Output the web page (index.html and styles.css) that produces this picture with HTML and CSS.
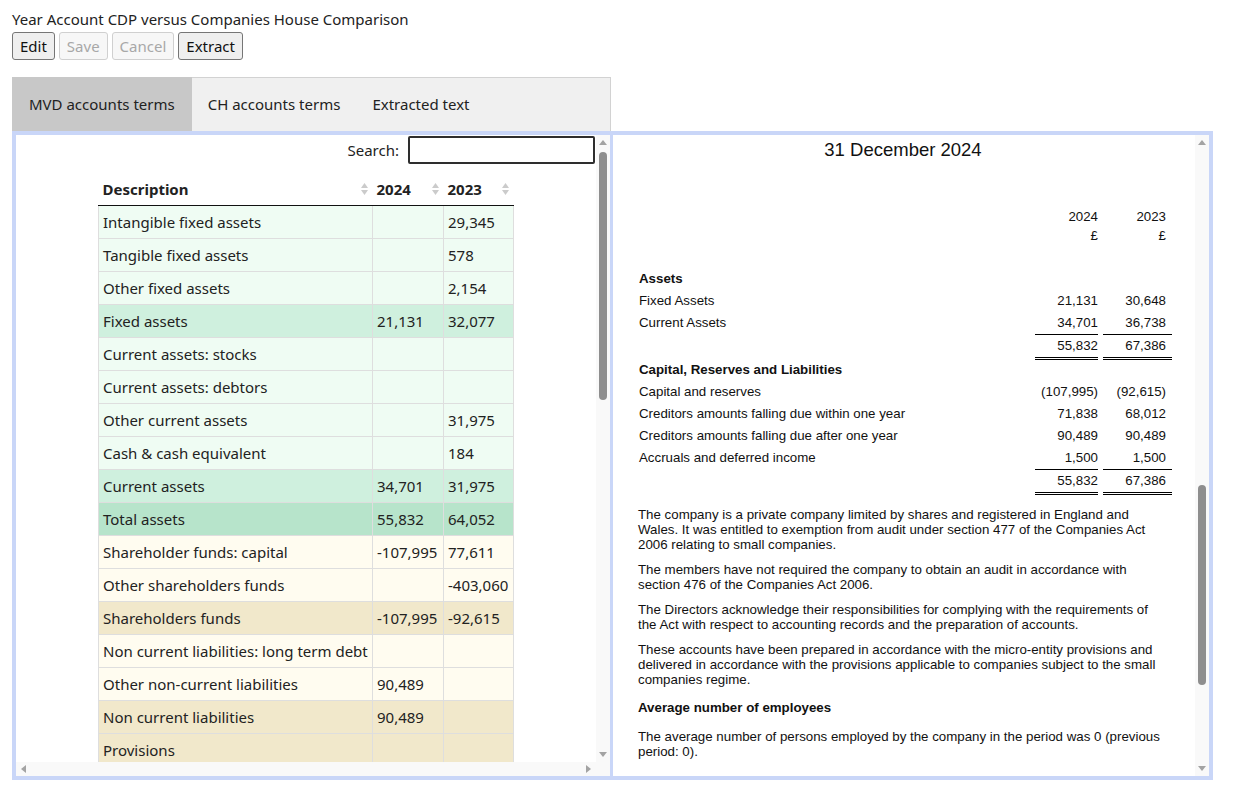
FILE: index.html
```html
<!DOCTYPE html>
<html lang="en">
<head>
  <meta charset="UTF-8" />
  <meta name="viewport" content="width=device-width, initial-scale=1.0"/>
  <title>Year Account Comparison</title>
  <link rel="stylesheet" href="styles.css">
</head>
<body>
  <div class="title">Year Account CDP versus Companies House Comparison</div>
  <div class="toolbar">
    <button>Edit</button>
    <button disabled>Save</button>
    <button disabled>Cancel</button>
    <button>Extract</button>
  </div>

  <!-- Tabs -->
  <div class="tabs">
    <div class="tab active">MVD accounts terms</div>
    <div class="tab">CH accounts terms</div>
    <div class="tab">Extracted text</div>
  </div>

  <div class="compare">
    <!-- Left: mapped terms -->
    <div class="pane pane-left">
      <div class="pane-body">
        <div class="search">
          <label>Search:</label>
          <input type="text">
        </div>
        <table class="terms">
          <colgroup>
            <col style="width:274px">
            <col style="width:71px">
            <col style="width:70px">
          </colgroup>
          <thead>
            <tr>
              <th><div class="th">Description <svg class="sort" width="7" height="12" viewBox="0 0 7 12"><polygon points="0,5 3.5,0 7,5"/><polygon points="0,7 3.5,12 7,7"/></svg></div></th>
              <th><div class="th">2024 <svg class="sort" width="7" height="12" viewBox="0 0 7 12"><polygon points="0,5 3.5,0 7,5"/><polygon points="0,7 3.5,12 7,7"/></svg></div></th>
              <th><div class="th">2023 <svg class="sort" width="7" height="12" viewBox="0 0 7 12"><polygon points="0,5 3.5,0 7,5"/><polygon points="0,7 3.5,12 7,7"/></svg></div></th>
            </tr>
          </thead>
          <tbody>
            <tr class="g1"><td>Intangible fixed assets</td><td></td><td>29,345</td></tr>
            <tr class="g1"><td>Tangible fixed assets</td><td></td><td>578</td></tr>
            <tr class="g1"><td>Other fixed assets</td><td></td><td>2,154</td></tr>
            <tr class="g2"><td>Fixed assets</td><td>21,131</td><td>32,077</td></tr>
            <tr class="g1"><td>Current assets: stocks</td><td></td><td></td></tr>
            <tr class="g1"><td>Current assets: debtors</td><td></td><td></td></tr>
            <tr class="g1"><td>Other current assets</td><td></td><td>31,975</td></tr>
            <tr class="g1"><td>Cash &amp; cash equivalent</td><td></td><td>184</td></tr>
            <tr class="g2"><td>Current assets</td><td>34,701</td><td>31,975</td></tr>
            <tr class="g3"><td>Total assets</td><td>55,832</td><td>64,052</td></tr>
            <tr class="y1"><td>Shareholder funds: capital</td><td>-107,995</td><td>77,611</td></tr>
            <tr class="y1"><td>Other shareholders funds</td><td></td><td>-403,060</td></tr>
            <tr class="y2"><td>Shareholders funds</td><td>-107,995</td><td>-92,615</td></tr>
            <tr class="y1"><td>Non current liabilities: long term debt</td><td></td><td></td></tr>
            <tr class="y1"><td>Other non-current liabilities</td><td>90,489</td><td></td></tr>
            <tr class="y2"><td>Non current liabilities</td><td>90,489</td><td></td></tr>
            <tr class="y2"><td>Provisions</td><td></td><td></td></tr>
          </tbody>
        </table>
      </div>
      <div class="vbar">
        <span class="arr up"></span>
        <div class="track"><div class="thumb" style="margin-top:2px;height:248px"></div></div>
        <span class="arr down"></span>
      </div>
      <div class="hbar">
        <span class="arr left"></span>
        <span class="arr right"></span>
      </div>
      <div class="corner"></div>
    </div>

    <!-- Right: filed accounts -->
    <div class="pane pane-right">
      <div class="pane-body doc">
        <h2>31 December 2024</h2>
        <div class="years">
          <div class="row"><span></span><span class="num">2024</span><span class="num">2023</span></div>
          <div class="row"><span></span><span class="num">£</span><span class="num">£</span></div>
        </div>
        <div class="row first"><b>Assets</b></div>
        <div class="row"><span>Fixed Assets</span><span class="num">21,131</span><span class="num">30,648</span></div>
        <div class="row"><span>Current Assets</span><span class="num u">34,701</span><span class="num u">36,738</span></div>
        <div class="row sum"><span></span><span class="num uu">55,832</span><span class="num uu">67,386</span></div>
        <div class="row"><b>Capital, Reserves and Liabilities</b></div>
        <div class="row"><span>Capital and reserves</span><span class="num">(107,995)</span><span class="num">(92,615)</span></div>
        <div class="row"><span>Creditors amounts falling due within one year</span><span class="num">71,838</span><span class="num">68,012</span></div>
        <div class="row"><span>Creditors amounts falling due after one year</span><span class="num">90,489</span><span class="num">90,489</span></div>
        <div class="row"><span>Accruals and deferred income</span><span class="num u">1,500</span><span class="num u">1,500</span></div>
        <div class="row"><span></span><span class="num uu">55,832</span><span class="num uu">67,386</span></div>

        <p class="lead">The company is a private company limited by shares and registered in England and Wales. It was entitled to exemption from audit under section 477 of the Companies Act 2006 relating to small companies.</p>
        <p>The members have not required the company to obtain an audit in accordance with section 476 of the Companies Act 2006.</p>
        <p>The Directors acknowledge their responsibilities for complying with the requirements of the Act with respect to accounting records and the preparation of accounts.</p>
        <p>These accounts have been prepared in accordance with the micro-entity provisions and delivered in accordance with the provisions applicable to companies subject to the small companies regime.</p>
        <h3>Average number of employees</h3>
        <p>The average number of persons employed by the company in the period was 0 (previous period: 0).</p>
      </div>
      <div class="vbar">
        <span class="arr up"></span>
        <div class="track"><div class="thumb" style="margin-top:335px;height:200px"></div></div>
        <span class="arr down"></span>
      </div>
    </div>
  </div>
</body>
</html>
```

FILE: styles.css
```css
body {
  margin: 0;
  padding: 9px 12px;
  font-family: "Noto Sans", "Open Sans", sans-serif;
  font-size: 15px;
  color: #222;
  background: #fff;
}
.title {
  line-height: 20px;
}

/* Toolbar */
.toolbar {
  display: flex;
  gap: 4px;
  margin-top: 3px;
}
button {
  height: 28px;
  padding: 0 7px;
  font: inherit;
  color: #111;
  background: #efefef;
  border: 1px solid #767676;
  border-radius: 3px;
}
button:disabled {
  color: #a8a8a8;
  background: #f7f7f7;
  border-color: #d0d0d0;
}

/* Tabs */
.tabs {
  display: flex;
  width: 599px;
  height: 54px;
  margin-top: 17px;
  box-sizing: border-box;
  background: #f0f0f0;
  border: 1px solid #d2d2d2;
  border-bottom: none;
}
.tab {
  display: flex;
  align-items: center;
  padding: 0 16px 1px;
}
.tab.active {
  margin: -1px 0 0 -1px;
  padding-left: 17px;
  padding-right: 17px;
  background: #c8c8c8;
}

/* Compare frame */
.compare {
  display: flex;
  width: 1201px;
  height: 649px;
  box-sizing: border-box;
  border: 4px solid #c9d6f8;
}
.pane {
  display: grid;
  overflow: hidden;
}
.pane-left {
  width: 597px;
  box-sizing: border-box;
  border-right: 3px solid #c9d6f8;
  grid-template-columns: 1fr 14px;
  grid-template-rows: 1fr 14px;
}
.pane-right {
  flex: 1;
  grid-template-columns: 1fr 14px;
}
.pane-body {
  overflow: hidden;
  min-height: 0;
}

/* Scrollbars */
.vbar {
  display: flex;
  flex-direction: column;
  align-items: center;
  background: #f9f9f9;
}
.vbar .track {
  flex: 1;
  width: 100%;
  display: flex;
  flex-direction: column;
  align-items: center;
}
.thumb {
  width: 8px;
  border-radius: 4px;
  background: #8e8e8e;
}
.hbar {
  display: flex;
  justify-content: space-between;
  align-items: center;
  background: #f9f9f9;
}
.corner {
  background: #f9f9f9;
}
.arr {
  display: flex;
  align-items: center;
  justify-content: center;
  width: 15px;
  height: 15px;
  flex: none;
}
.arr::before {
  content: "";
  border: 4px solid transparent;
}
.arr.up::before { border-bottom: 5px solid #a3a3a3; border-top: none; }
.arr.down::before { border-top: 5px solid #a3a3a3; border-bottom: none; }
.arr.left::before { border-right: 5px solid #a3a3a3; border-left: none; }
.arr.right::before { border-left: 5px solid #a3a3a3; border-right: none; }

/* Terms table */
.search {
  display: flex;
  justify-content: flex-end;
  align-items: center;
  margin: 1px 1px 0 0;
}
.search label {
  margin-right: 9px;
}
.search input {
  width: 187px;
  height: 28px;
  box-sizing: border-box;
  border: 2px solid #2e2e2e;
  border-radius: 2px;
  font: inherit;
}
.terms {
  width: 415px;
  margin: 11px auto 0;
  table-layout: fixed;
  border-collapse: collapse;
}
.terms th {
  padding: 3px 5px 5px 4px;
  line-height: 22px;
  text-align: left;
  border-bottom: 1px solid #111;
}
.th {
  display: flex;
  justify-content: space-between;
  align-items: center;
}
.sort {
  fill: #cbcbcb;
}
.terms td {
  padding: 5px 4px;
  line-height: 22px;
  white-space: nowrap;
  border: 1px solid #dedede;
}
.g1 { background: #effcf3; }
.g2 { background: #cff0de; }
.g3 { background: #b7e4cb; }
.y1 { background: #fffcf0; }
.y2 { background: #f1e8cb; }

/* Filed accounts */
.doc {
  padding: 4px 22px 0 26px;
  font-family: "Liberation Sans", Arial, sans-serif;
  font-size: 13.3px;
  color: #111;
}
.doc h2 {
  margin: 0 0 0 -6px;
  font-size: 18.5px;
  font-weight: normal;
  line-height: 22px;
  text-align: center;
}
.years {
  margin-top: 46px;
}
.years .row {
  line-height: 19px;
}
.row {
  display: grid;
  grid-template-columns: 1fr 63px 69px;
  column-gap: 5px;
  width: 533px;
  line-height: 22px;
}
.row.first {
  margin-top: 23px;
}
.row.sum {
  margin-bottom: -1px;
}
.num {
  text-align: right;
}
.num + .num {
  padding-right: 6px;
}
.u { border-bottom: 1px solid #000; }
.uu { border-bottom: 3px double #000; }
.doc p {
  width: 530px;
  margin: 10px 0 10px -1px;
  line-height: 15px;
}
.doc p.lead {
  margin-top: 12px;
}
.doc h3 {
  margin: 13px 0 13px -1px;
  font-size: 13.3px;
  line-height: 16px;
}
```
